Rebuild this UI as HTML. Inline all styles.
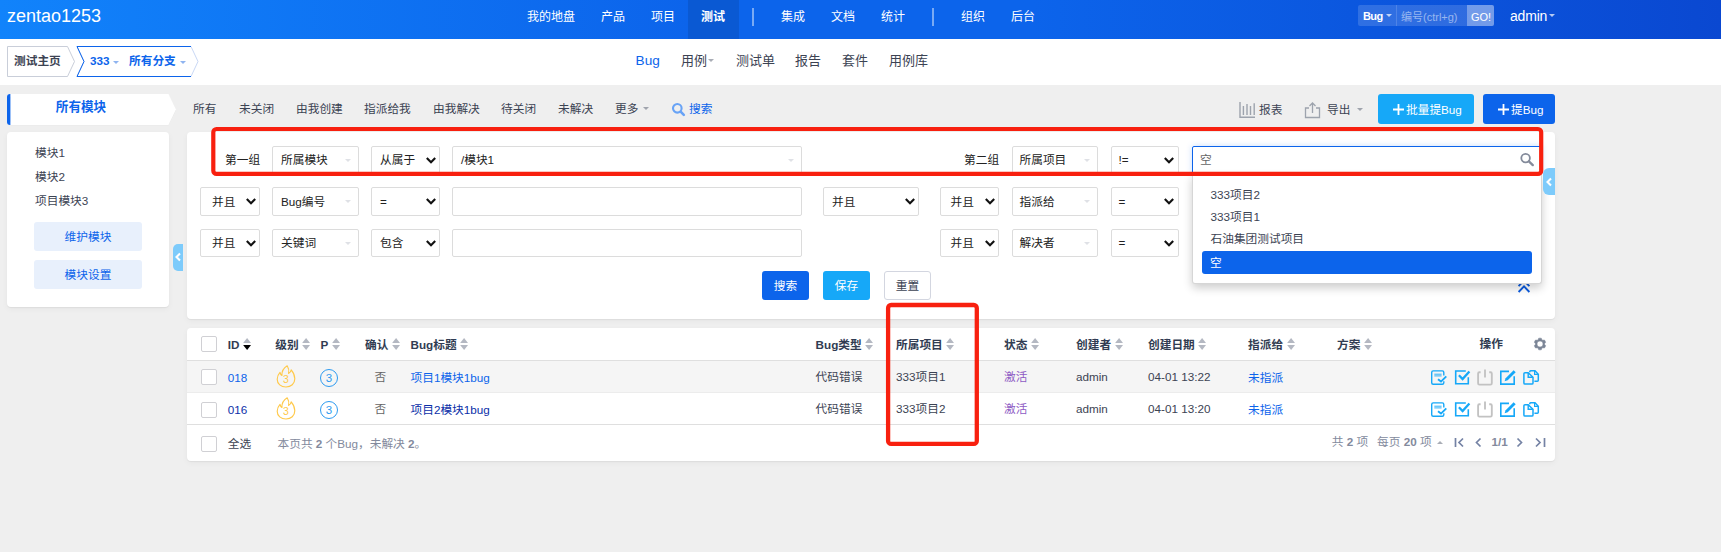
<!DOCTYPE html>
<html lang="zh-CN">
<head>
<meta charset="utf-8">
<title>Bug - zentao1253</title>
<style>
*{box-sizing:border-box;margin:0;padding:0}
html,body{width:1721px;height:552px;overflow:hidden}
body{background:#efefef;font-family:"Liberation Sans","Noto Sans CJK SC",sans-serif;font-size:11.7px;color:#3c4353;position:relative;line-height:18px}
.a{position:absolute;white-space:nowrap}
.b{font-weight:bold}
#header{left:0;top:0;width:1721px;height:38.7px;background:linear-gradient(90deg,#1183fb 0,#0c64eb 40%,#0c64eb 60%,#0a48d1 100%)}
#header .nav{color:#fff;font-size:12px;top:8px;line-height:18px}
#sub{left:0;top:38.7px;width:1721px;height:46px;background:#fff}
.subnav{top:51px;font-size:13px;line-height:20px;color:#3c4353}
.mm{top:100px;line-height:18px;color:#3c4353}
.panel{background:#fff;border-radius:4px;box-shadow:0 1px 1px rgba(0,0,0,.05),0 2px 6px 0 rgba(0,0,0,.045)}
.fc{position:absolute;height:28px;border:1px solid #dcdcdc;border-radius:2px;background:#fff;line-height:26px;padding-left:8px;white-space:nowrap;color:#222}
.chev{position:absolute;right:2.5px;top:9px;width:12px;height:9px}
.cc{position:absolute;right:7px;top:12px;width:0;height:0;border-left:3px solid transparent;border-right:3px solid transparent;border-top:3px solid #dfe1e6}
.btn{position:absolute;height:28px;border-radius:3px;line-height:28px;text-align:center;color:#fff;white-space:nowrap}
.caret{display:inline-block;width:0;height:0;border-left:3px solid transparent;border-right:3px solid transparent;border-top:3px solid currentColor;vertical-align:middle;opacity:.6}
.th{top:336px;font-weight:bold;color:#313c52;line-height:18px}
.td{line-height:18px}
.cb{position:absolute;width:16px;height:16px;border:1px solid #d0d0d4;border-radius:2px;background:#fff}
.sort{display:inline-block;width:8.2px;height:12px;vertical-align:-1px;margin-left:3.5px}
</style>
</head>
<body>
<!-- ============ HEADER ============ -->
<div id="header" class="a">
  <div class="a" style="left:7px;top:5px;font-size:18px;line-height:22px;color:#fff">zentao1253</div>
  <div class="a" style="left:688px;top:0;width:51px;height:38.7px;background:rgba(0,0,0,.1)"></div>
  <div class="a nav" style="left:527px">我的地盘</div>
  <div class="a nav" style="left:601px">产品</div>
  <div class="a nav" style="left:651px">项目</div>
  <div class="a nav b" style="left:701px">测试</div>
  <div class="a" style="left:752px;top:8px;width:2px;height:18px;background:rgba(255,255,255,.45)"></div>
  <div class="a nav" style="left:781px">集成</div>
  <div class="a nav" style="left:831px">文档</div>
  <div class="a nav" style="left:881px">统计</div>
  <div class="a" style="left:932px;top:8px;width:2px;height:18px;background:rgba(255,255,255,.45)"></div>
  <div class="a nav" style="left:961px">组织</div>
  <div class="a nav" style="left:1011px">后台</div>
  <!-- search box -->
  <div class="a" style="left:1358px;top:5px;width:136px;height:21px;background:rgba(255,255,255,.15);border-radius:2px"></div>
  <div class="a" style="left:1396px;top:5px;width:1px;height:21px;background:rgba(255,255,255,.15)"></div>
  <div class="a" style="left:1467px;top:5px;width:27px;height:21px;background:rgba(255,255,255,.33);border-radius:0 2px 2px 0"></div>
  <div class="a b" style="left:1363px;top:7px;font-size:11px;line-height:18px;color:#fff;letter-spacing:-0.6px">Bug</div>
  <div class="a" style="left:1386px;top:14px;width:0;height:0;border-left:3px solid transparent;border-right:3px solid transparent;border-top:3px solid rgba(255,255,255,.7)"></div>
  <div class="a" style="left:1401px;top:8px;font-size:11px;line-height:18px;color:rgba(255,255,255,.5)">编号(ctrl+g)</div>
  <div class="a" style="left:1471px;top:8px;font-size:11px;line-height:18px;color:#fff">GO!</div>
  <div class="a" style="left:1510px;top:6px;font-size:14px;line-height:20px;color:#fff;letter-spacing:-0.2px">admin</div>
  <div class="a" style="left:1549px;top:14px;width:0;height:0;border-left:3px solid transparent;border-right:3px solid transparent;border-top:3px solid rgba(255,255,255,.7)"></div>
</div>

<!-- ============ SUB HEADER ============ -->
<div id="sub" class="a"></div>
<svg class="a" style="left:0;top:40px" width="210" height="44" viewBox="0 0 210 44">
  <path d="M7.5 6.5H67.5L74.5 21.5L67.5 36.5H7.5Z" fill="#fff" stroke="#c9ced9" stroke-width="1"/>
  <path d="M77 6.5H191L198 21.5L191 36.5H77L84 21.5Z" fill="#fff" stroke="#c9d8f5" stroke-width="1"/>
  <path d="M77 6.5H191M191 36.5H77L84 21.5L77 6.5" fill="none" stroke="#0c64eb" stroke-width="1"/>
</svg>
<div class="a b" style="left:14px;top:52px;line-height:18px;color:#3c4353">测试主页</div>
<div class="a b" style="left:90px;top:52px;line-height:18px;color:#0c64eb">333</div>
<div class="a" style="left:113px;top:61px;width:0;height:0;border-left:3px solid transparent;border-right:3px solid transparent;border-top:3px solid #8fb4f0"></div>
<div class="a b" style="left:129px;top:52px;line-height:18px;color:#0c64eb">所有分支</div>
<div class="a" style="left:180px;top:61px;width:0;height:0;border-left:3px solid transparent;border-right:3px solid transparent;border-top:3px solid #8fb4f0"></div>

<div class="a subnav" style="left:635.6px;color:#0c64eb;font-size:13.6px">Bug</div>
<div class="a subnav" style="left:681px">用例</div>
<div class="a" style="left:708px;top:59px;width:0;height:0;border-left:3px solid transparent;border-right:3px solid transparent;border-top:3px solid #a9adb6"></div>
<div class="a subnav" style="left:736px">测试单</div>
<div class="a subnav" style="left:795px">报告</div>
<div class="a subnav" style="left:842px">套件</div>
<div class="a subnav" style="left:889px">用例库</div>

<!-- ============ SIDEBAR ============ -->
<svg class="a" style="left:0;top:90px" width="180" height="40" viewBox="0 0 180 40">
  <path d="M10 4.7H168.5L176 20L168.5 35.3H10Q7 35.3 7 32.3V7.7Q7 4.7 10 4.7Z" fill="rgba(0,0,0,.06)"/>
  <path d="M10 4H168.5L176 19.5L168.5 35H10Q7 35 7 32V7Q7 4 10 4Z" fill="#fff"/>
  <path d="M10.4 4H10Q7 4 7 7V32Q7 35 10 35H10.4Z" fill="#0c64eb"/>
</svg>
<div class="a b" style="left:7px;top:98px;width:148px;text-align:center;font-size:12.6px;line-height:18px;color:#0c64eb">所有模块</div>
<div class="a panel" style="left:7px;top:132px;width:162px;height:175px"></div>
<div class="a" style="left:35px;top:144px">模块1</div>
<div class="a" style="left:35px;top:168px">模块2</div>
<div class="a" style="left:35px;top:192px">项目模块3</div>
<div class="a" style="left:34px;top:222px;width:108px;height:29px;background:#e8f0fc;border-radius:3px;text-align:center;line-height:29px;color:#0c64eb">维护模块</div>
<div class="a" style="left:34px;top:260px;width:108px;height:29px;background:#e8f0fc;border-radius:3px;text-align:center;line-height:29px;color:#0c64eb">模块设置</div>
<!-- collapse handle -->
<div class="a" style="left:173px;top:244px;width:10px;height:27px;background:#7dcbfb;border-radius:5px 0 0 5px"></div>
<svg class="a" style="left:174px;top:252px" width="8" height="10" viewBox="0 0 8 10"><path d="M6 1.5L2.5 5L6 8.5" fill="none" stroke="#fff" stroke-width="2.1"/></svg>

<!-- ============ MAIN MENU ============ -->
<div class="a mm" style="left:193px">所有</div>
<div class="a mm" style="left:239px">未关闭</div>
<div class="a mm" style="left:296px">由我创建</div>
<div class="a mm" style="left:364px">指派给我</div>
<div class="a mm" style="left:433px">由我解决</div>
<div class="a mm" style="left:501px">待关闭</div>
<div class="a mm" style="left:558px">未解决</div>
<div class="a mm" style="left:615px">更多</div>
<div class="a" style="left:643px;top:107px;width:0;height:0;border-left:3px solid transparent;border-right:3px solid transparent;border-top:3px solid #a0a4ad"></div>
<svg class="a" style="left:671px;top:102px" width="15" height="15" viewBox="0 0 15 15"><circle cx="6.3" cy="6.3" r="4.3" fill="none" stroke="#68a3f6" stroke-width="2.1"/><path d="M9.6 9.7L12.8 12.9" stroke="#68a3f6" stroke-width="2.6" stroke-linecap="round"/></svg>
<div class="a mm" style="left:689px;color:#0c64eb">搜索</div>

<svg class="a" style="left:1239px;top:101.5px" width="17" height="17" viewBox="0 0 17 17"><path d="M1 0V15.3H16" fill="none" stroke="#9da3ad" stroke-width="1.4"/><path d="M4.4 4V13M8 2V13M11.5 4V13M15.2 1.2V13" stroke="#9da3ad" stroke-width="1.4"/></svg>
<div class="a mm" style="left:1259px;top:101px">报表</div>
<svg class="a" style="left:1304px;top:100.5px" width="17" height="18" viewBox="0 0 17 18"><path d="M5 7H1.5V16.5H15.5V7H12" fill="none" stroke="#9da3ad" stroke-width="1.3"/><path d="M8.5 12V2M5.5 5L8.5 2L11.5 5" fill="none" stroke="#9da3ad" stroke-width="1.3"/></svg>
<div class="a mm" style="left:1327px;top:101px">导出</div>
<div class="a" style="left:1357px;top:108px;width:0;height:0;border-left:3px solid transparent;border-right:3px solid transparent;border-top:3px solid #a0a4ad"></div>
<div class="btn" style="left:1378px;top:94px;width:96px;height:30px;line-height:32px;background:#16a8f8;text-align:left;padding-left:28px"><svg style="position:absolute;left:15px;top:10px" width="11" height="11" viewBox="0 0 11 11"><path d="M5.5 0V11M0 5.5H11" stroke="#fff" stroke-width="1.8"/></svg>批量提Bug</div>
<div class="btn" style="left:1483px;top:94px;width:72px;height:30px;line-height:32px;background:#0c64eb;text-align:left;padding-left:28px"><svg style="position:absolute;left:14.5px;top:10px" width="11" height="11" viewBox="0 0 11 11"><path d="M5.5 0V11M0 5.5H11" stroke="#fff" stroke-width="1.8"/></svg>提Bug</div>

<!-- ============ SEARCH PANEL ============ -->
<div class="a panel" style="left:187px;top:132px;width:1368px;height:187px"></div>

<!-- ============ SEARCH FORM ============ -->
<div class="a" style="left:225px;top:151px;color:#222">第一组</div>
<div class="fc" style="left:272px;top:146px;width:86.5px">所属模块<i class="cc"></i></div>
<div class="fc" style="left:371px;top:146px;width:69px">从属于<svg class="chev" viewBox="0 0 12 9"><path d="M1.8 2L6 6.3L10.2 2" fill="none" stroke="#111" stroke-width="2.1"/></svg></div>
<div class="fc" style="left:452px;top:146px;width:350px">/模块1<i class="cc" style="right:7px"></i></div>
<div class="a" style="left:964px;top:151px;color:#222">第二组</div>
<div class="fc" style="left:1012px;top:146px;width:85.5px;padding-left:6.5px">所属项目<i class="cc"></i></div>
<div class="fc" style="left:1111px;top:146px;width:67.5px;padding-left:6.5px">!=<svg class="chev" viewBox="0 0 12 9"><path d="M1.8 2L6 6.3L10.2 2" fill="none" stroke="#111" stroke-width="2.1"/></svg></div>
<div class="fc" style="left:1192px;top:146px;width:350px;padding-left:7px;border-color:#0c64eb;color:#666;box-shadow:0 0 6px rgba(12,100,235,.22)">空</div>
<svg class="a" style="left:1517.5px;top:150.2px" width="18" height="18" viewBox="0 0 18 18"><circle cx="7.6" cy="8.1" r="4.3" fill="none" stroke="#848b9b" stroke-width="1.8"/><path d="M10.9 11.4L14.8 15.1" stroke="#848b9b" stroke-width="2.3" stroke-linecap="round"/></svg>
<div class="fc" style="left:200px;top:187px;width:60px;height:29px;line-height:27px;padding-left:11px">并且<svg class="chev" viewBox="0 0 12 9"><path d="M1.8 2L6 6.3L10.2 2" fill="none" stroke="#111" stroke-width="2.1"/></svg></div>
<div class="fc" style="left:272px;top:187px;width:86.5px;height:29px;line-height:27px">Bug编号<i class="cc"></i></div>
<div class="fc" style="left:371px;top:187px;width:69px;height:29px;line-height:27px">=<svg class="chev" viewBox="0 0 12 9"><path d="M1.8 2L6 6.3L10.2 2" fill="none" stroke="#111" stroke-width="2.1"/></svg></div>
<div class="fc" style="left:452px;top:187px;width:350px;height:29px;line-height:27px;"></div>
<div class="fc" style="left:823px;top:187px;width:96px;height:29px;line-height:27px">并且<svg class="chev" viewBox="0 0 12 9"><path d="M1.8 2L6 6.3L10.2 2" fill="none" stroke="#111" stroke-width="2.1"/></svg></div>
<div class="fc" style="left:940px;top:187px;width:59px;height:29px;line-height:27px;padding-left:9.5px">并且<svg class="chev" viewBox="0 0 12 9"><path d="M1.8 2L6 6.3L10.2 2" fill="none" stroke="#111" stroke-width="2.1"/></svg></div>
<div class="fc" style="left:1012px;top:187px;width:85.5px;padding-left:6.5px;height:29px;line-height:27px">指派给<i class="cc"></i></div>
<div class="fc" style="left:1111px;top:187px;width:67.5px;padding-left:6.5px;height:29px;line-height:27px">=<svg class="chev" viewBox="0 0 12 9"><path d="M1.8 2L6 6.3L10.2 2" fill="none" stroke="#111" stroke-width="2.1"/></svg></div>
<div class="fc" style="left:1192px;top:187px;width:350px;height:29px;line-height:27px;"></div>
<div class="fc" style="left:200px;top:229px;width:60px;padding-left:11px">并且<svg class="chev" viewBox="0 0 12 9"><path d="M1.8 2L6 6.3L10.2 2" fill="none" stroke="#111" stroke-width="2.1"/></svg></div>
<div class="fc" style="left:272px;top:229px;width:86.5px">关键词<i class="cc"></i></div>
<div class="fc" style="left:371px;top:229px;width:69px">包含<svg class="chev" viewBox="0 0 12 9"><path d="M1.8 2L6 6.3L10.2 2" fill="none" stroke="#111" stroke-width="2.1"/></svg></div>
<div class="fc" style="left:452px;top:229px;width:350px;"></div>
<div class="fc" style="left:940px;top:229px;width:59px;padding-left:9.5px">并且<svg class="chev" viewBox="0 0 12 9"><path d="M1.8 2L6 6.3L10.2 2" fill="none" stroke="#111" stroke-width="2.1"/></svg></div>
<div class="fc" style="left:1012px;top:229px;width:85.5px;padding-left:6.5px">解决者<i class="cc"></i></div>
<div class="fc" style="left:1111px;top:229px;width:67.5px;padding-left:6.5px">=<svg class="chev" viewBox="0 0 12 9"><path d="M1.8 2L6 6.3L10.2 2" fill="none" stroke="#111" stroke-width="2.1"/></svg></div>
<div class="fc" style="left:1192px;top:229px;width:350px;"></div>
<div class="btn" style="left:762px;top:271px;width:47px;height:29px;line-height:29px;background:#0c64eb">搜索</div>
<div class="btn" style="left:823px;top:271px;width:47px;height:29px;line-height:29px;background:#16a8f8">保存</div>
<div class="btn" style="left:884px;top:271px;width:47px;height:29px;background:#fff;border:1px solid #d3d6e0;color:#3c4353;line-height:27px">重置</div>
<svg class="a" style="left:1516.5px;top:278px" width="14" height="16" viewBox="0 0 14 16"><path d="M1.6 8.2L7 2.6L12.4 8.2M1.6 14L7 8.4L12.4 14" fill="none" stroke="#0c5ce0" stroke-width="1.9"/></svg>
<div class="a" style="left:1192px;top:174px;width:349.5px;height:110px;background:#fff;border:1px solid #d6d6d6;border-top:none;border-radius:0 0 3px 3px;box-shadow:0 4px 10px rgba(0,0,0,.2)"></div>
<div class="a" style="left:1210.5px;top:186px;color:#3c4353">333项目2</div>
<div class="a" style="left:1210.5px;top:208px;color:#3c4353">333项目1</div>
<div class="a" style="left:1210.5px;top:230px;color:#3c4353">石油集团测试项目</div>
<div class="a" style="left:1202px;top:251px;width:330px;height:23px;background:#0c64eb;border-radius:3px;color:#fff;padding-left:8px;line-height:23px">空</div>

<div class="a" style="left:1543px;top:168px;width:12px;height:27px;background:#7dcbfb;border-radius:6px 0 0 6px"></div>
<svg class="a" style="left:1545px;top:177px" width="8" height="10" viewBox="0 0 8 10"><path d="M6 1.5L2.5 5L6 8.5" fill="none" stroke="#fff" stroke-width="2.1"/></svg>

<!-- ============ TABLE PANEL ============ -->
<div class="a panel" style="left:187px;top:328px;width:1368px;height:133px"></div>
<div class="a" style="left:187px;top:360.5px;width:1368px;height:32px;background:#f5f5f5"></div>
<div class="a" style="left:187px;top:360px;width:1368px;height:1px;background:#dfdfdf"></div>
<div class="a" style="left:187px;top:392px;width:1368px;height:1px;background:#ececec"></div>
<div class="a" style="left:187px;top:424px;width:1368px;height:1px;background:#dfdfdf"></div>
<div class="a th" style="left:227.8px">ID<svg class="sort" viewBox="0 0 8 11.8"><path d="M4 0L7.9 5H0.1Z" fill="#b4b8c2"/><path d="M4 11.8L7.9 6.8H0.1Z" fill="#000"/></svg></div>
<div class="a th" style="left:275.2px">级别<svg class="sort" viewBox="0 0 8 11.8"><path d="M4 0L7.9 5H0.1Z" fill="#b4b8c2"/><path d="M4 11.8L7.9 6.8H0.1Z" fill="#b4b8c2"/></svg></div>
<div class="a th" style="left:320.5px">P<svg class="sort" viewBox="0 0 8 11.8"><path d="M4 0L7.9 5H0.1Z" fill="#b4b8c2"/><path d="M4 11.8L7.9 6.8H0.1Z" fill="#b4b8c2"/></svg></div>
<div class="a th" style="left:365px">确认<svg class="sort" viewBox="0 0 8 11.8"><path d="M4 0L7.9 5H0.1Z" fill="#b4b8c2"/><path d="M4 11.8L7.9 6.8H0.1Z" fill="#b4b8c2"/></svg></div>
<div class="a th" style="left:410.5px">Bug标题<svg class="sort" viewBox="0 0 8 11.8"><path d="M4 0L7.9 5H0.1Z" fill="#b4b8c2"/><path d="M4 11.8L7.9 6.8H0.1Z" fill="#b4b8c2"/></svg></div>
<div class="a th" style="left:815.6px">Bug类型<svg class="sort" viewBox="0 0 8 11.8"><path d="M4 0L7.9 5H0.1Z" fill="#b4b8c2"/><path d="M4 11.8L7.9 6.8H0.1Z" fill="#b4b8c2"/></svg></div>
<div class="a th" style="left:896px">所属项目<svg class="sort" viewBox="0 0 8 11.8"><path d="M4 0L7.9 5H0.1Z" fill="#b4b8c2"/><path d="M4 11.8L7.9 6.8H0.1Z" fill="#b4b8c2"/></svg></div>
<div class="a th" style="left:1004px">状态<svg class="sort" viewBox="0 0 8 11.8"><path d="M4 0L7.9 5H0.1Z" fill="#b4b8c2"/><path d="M4 11.8L7.9 6.8H0.1Z" fill="#b4b8c2"/></svg></div>
<div class="a th" style="left:1076px">创建者<svg class="sort" viewBox="0 0 8 11.8"><path d="M4 0L7.9 5H0.1Z" fill="#b4b8c2"/><path d="M4 11.8L7.9 6.8H0.1Z" fill="#b4b8c2"/></svg></div>
<div class="a th" style="left:1148px">创建日期<svg class="sort" viewBox="0 0 8 11.8"><path d="M4 0L7.9 5H0.1Z" fill="#b4b8c2"/><path d="M4 11.8L7.9 6.8H0.1Z" fill="#b4b8c2"/></svg></div>
<div class="a th" style="left:1248px">指派给<svg class="sort" viewBox="0 0 8 11.8"><path d="M4 0L7.9 5H0.1Z" fill="#b4b8c2"/><path d="M4 11.8L7.9 6.8H0.1Z" fill="#b4b8c2"/></svg></div>
<div class="a th" style="left:1337px">方案<svg class="sort" viewBox="0 0 8 11.8"><path d="M4 0L7.9 5H0.1Z" fill="#b4b8c2"/><path d="M4 11.8L7.9 6.8H0.1Z" fill="#b4b8c2"/></svg></div>
<div class="a th" style="left:1479.5px;top:335px">操作</div>
<svg class="a" style="left:1532.6px;top:336.8px" width="14" height="14" viewBox="0 0 14 14"><path d="M5.06 2.83L5.75 1.13L8.25 1.13L8.94 2.83L9.64 3.23L11.46 2.99L12.71 5.15L11.58 6.60L11.58 7.40L12.71 8.85L11.46 11.01L9.64 10.77L8.94 11.17L8.25 12.87L5.75 12.87L5.06 11.17L4.36 10.77L2.54 11.01L1.29 8.85L2.42 7.40L2.42 6.60L1.29 5.15L2.54 2.99L4.36 3.23ZM10.00 7A3.0 3.0 0 1 0 4.00 7A3.0 3.0 0 1 0 10.00 7Z" fill="#7b8596" fill-rule="evenodd" stroke="#7b8596" stroke-width="0.5" stroke-linejoin="round"/></svg>
<div class="cb" style="left:201px;top:336px"></div>
<div class="cb" style="left:201px;top:369px"></div>
<div class="cb" style="left:201px;top:402px"></div>
<div class="cb" style="left:201px;top:436px"></div>
<div class="a td" style="left:227.8px;top:368.5px;color:#0c64eb">018</div>
<svg class="a" style="left:276px;top:365.2px" width="20" height="23" viewBox="0 0 20 23"><path d="M11.2 0.8C13 3.6 13.2 6 12.6 8.4C14.2 7.8 15 6.4 15.2 4.8C17.6 7.6 18.8 10.6 18.8 13.8C18.8 18.8 15 22 10 22C5 22 1.2 18.8 1.2 14.2C1.2 11.4 2.4 9.2 4 7.4C4.3 8.8 4.9 9.8 5.9 10.4C5.8 6.6 7.6 3 11.2 0.8Z" fill="none" stroke="#ffc94a" stroke-width="1.15" stroke-linejoin="round"/><text x="10" y="18" font-size="10.5" text-anchor="middle" fill="#ffc94a" font-family="Liberation Sans, sans-serif">3</text></svg>
<div class="a" style="left:320px;top:368.5px;width:18px;height:18px;border:1.2px solid #2e9bf0;border-radius:50%;color:#2e9bf0;text-align:center;line-height:16px;font-size:11.5px">3</div>
<div class="a td" style="left:374.5px;top:367.5px;color:#666">否</div>
<div class="a td" style="left:410.5px;top:368.5px;color:#0c64eb">项目1模块1bug</div>
<div class="a td" style="left:815.6px;top:367.5px">代码错误</div>
<div class="a td" style="left:896px;top:367.5px">333项目1</div>
<div class="a td" style="left:1004px;top:367.5px;color:#8e5bc4">激活</div>
<div class="a td" style="left:1076px;top:367.5px">admin</div>
<div class="a td" style="left:1148px;top:367.5px">04-01 13:22</div>
<div class="a td" style="left:1248px;top:368.5px;color:#0c64eb">未指派</div>
<div class="a td" style="left:227.8px;top:400.5px;color:#0b2fa8">016</div>
<svg class="a" style="left:276px;top:397.2px" width="20" height="23" viewBox="0 0 20 23"><path d="M11.2 0.8C13 3.6 13.2 6 12.6 8.4C14.2 7.8 15 6.4 15.2 4.8C17.6 7.6 18.8 10.6 18.8 13.8C18.8 18.8 15 22 10 22C5 22 1.2 18.8 1.2 14.2C1.2 11.4 2.4 9.2 4 7.4C4.3 8.8 4.9 9.8 5.9 10.4C5.8 6.6 7.6 3 11.2 0.8Z" fill="none" stroke="#ffc94a" stroke-width="1.15" stroke-linejoin="round"/><text x="10" y="18" font-size="10.5" text-anchor="middle" fill="#ffc94a" font-family="Liberation Sans, sans-serif">3</text></svg>
<div class="a" style="left:320px;top:400.5px;width:18px;height:18px;border:1.2px solid #2e9bf0;border-radius:50%;color:#2e9bf0;text-align:center;line-height:16px;font-size:11.5px">3</div>
<div class="a td" style="left:374.5px;top:399.5px;color:#666">否</div>
<div class="a td" style="left:410.5px;top:400.5px;color:#0b2fa8">项目2模块1bug</div>
<div class="a td" style="left:815.6px;top:399.5px">代码错误</div>
<div class="a td" style="left:896px;top:399.5px">333项目2</div>
<div class="a td" style="left:1004px;top:399.5px;color:#8e5bc4">激活</div>
<div class="a td" style="left:1076px;top:399.5px">admin</div>
<div class="a td" style="left:1148px;top:399.5px">04-01 13:20</div>
<div class="a td" style="left:1248px;top:400.5px;color:#0c64eb">未指派</div>
<svg class="a" style="left:1430px;top:369px" width="112" height="18" viewBox="0 0 112 18" fill="none">
<path d="M13.8 6.6V3.4Q13.8 1.9 12.3 1.9H3.2Q1.7 1.9 1.7 3.4V13.7Q1.7 15.2 3.2 15.2H12.3Q13.8 15.2 13.8 13.7V12.2" stroke="#16a8f8" stroke-width="1.4"/>
<path d="M4.3 5.2H11.6M4.3 6.9H11.6" stroke="#16a8f8" stroke-width="0.9"/>
<path d="M8 10.2L11 12.6L16.3 7.4" stroke="#16a8f8" stroke-width="1.9"/>
<path d="M35.8 2H25.7V14.7H38.3V8.3" stroke="#16a8f8" stroke-width="1.6"/>
<path d="M28.9 6.2L32.6 10L39.4 2.5" stroke="#16a8f8" stroke-width="2.3"/>
<path d="M50.6 3.2H49.4Q48.1 3.2 48.1 4.5V14.3Q48.1 15.6 49.4 15.6H60.5Q61.8 15.6 61.8 14.3V4.5Q61.8 3.2 60.5 3.2H59.2" stroke="#c2c2c2" stroke-width="1.85"/>
<path d="M55 0.6V8.5" stroke="#c2c2c2" stroke-width="1.85"/>
<path d="M79 2.4H70.8V15.1H84.2V7.3" stroke="#16a8f8" stroke-width="1.6"/>
<path d="M74.6 12.2L75.6 9.2L83.6 1.2L85.7 3.3L77.7 11.3Z" fill="#16a8f8"/>
<path d="M98.2 3.7H95Q93.9 3.7 93.9 4.8V14Q93.9 15.1 95 15.1H101.9Q103 15.1 103 14V8.2Z" stroke="#16a8f8" stroke-width="1.5"/>
<path d="M98.2 3.9V8.2H102.8" stroke="#16a8f8" stroke-width="1.4"/>
<path d="M99.8 3.2V2.6Q99.8 1.8 100.6 1.8H105L108.3 5.2V11.2Q108.3 12.2 107.3 12.2H104.4" stroke="#16a8f8" stroke-width="1.5"/>
<path d="M104.6 2V5.4H108" stroke="#16a8f8" stroke-width="1.2"/>
</svg>
<svg class="a" style="left:1430px;top:401px" width="112" height="18" viewBox="0 0 112 18" fill="none">
<path d="M13.8 6.6V3.4Q13.8 1.9 12.3 1.9H3.2Q1.7 1.9 1.7 3.4V13.7Q1.7 15.2 3.2 15.2H12.3Q13.8 15.2 13.8 13.7V12.2" stroke="#16a8f8" stroke-width="1.4"/>
<path d="M4.3 5.2H11.6M4.3 6.9H11.6" stroke="#16a8f8" stroke-width="0.9"/>
<path d="M8 10.2L11 12.6L16.3 7.4" stroke="#16a8f8" stroke-width="1.9"/>
<path d="M35.8 2H25.7V14.7H38.3V8.3" stroke="#16a8f8" stroke-width="1.6"/>
<path d="M28.9 6.2L32.6 10L39.4 2.5" stroke="#16a8f8" stroke-width="2.3"/>
<path d="M50.6 3.2H49.4Q48.1 3.2 48.1 4.5V14.3Q48.1 15.6 49.4 15.6H60.5Q61.8 15.6 61.8 14.3V4.5Q61.8 3.2 60.5 3.2H59.2" stroke="#c2c2c2" stroke-width="1.85"/>
<path d="M55 0.6V8.5" stroke="#c2c2c2" stroke-width="1.85"/>
<path d="M79 2.4H70.8V15.1H84.2V7.3" stroke="#16a8f8" stroke-width="1.6"/>
<path d="M74.6 12.2L75.6 9.2L83.6 1.2L85.7 3.3L77.7 11.3Z" fill="#16a8f8"/>
<path d="M98.2 3.7H95Q93.9 3.7 93.9 4.8V14Q93.9 15.1 95 15.1H101.9Q103 15.1 103 14V8.2Z" stroke="#16a8f8" stroke-width="1.5"/>
<path d="M98.2 3.9V8.2H102.8" stroke="#16a8f8" stroke-width="1.4"/>
<path d="M99.8 3.2V2.6Q99.8 1.8 100.6 1.8H105L108.3 5.2V11.2Q108.3 12.2 107.3 12.2H104.4" stroke="#16a8f8" stroke-width="1.5"/>
<path d="M104.6 2V5.4H108" stroke="#16a8f8" stroke-width="1.2"/>
</svg>
<div class="a td" style="left:227.8px;top:435px;color:#3c4353">全选</div>
<div class="a td" style="left:277.5px;top:435px;color:#838a9d">本页共 <b>2</b> 个Bug，未解决 <b>2</b>。</div>
<div class="a td" style="left:1331.7px;top:432.5px;color:#838a9d">共 <b>2</b> 项</div>
<div class="a td" style="left:1377px;top:432.5px;color:#838a9d">每页 <b>20</b> 项</div>
<div class="a" style="left:1437px;top:441px;width:0;height:0;border-left:3px solid transparent;border-right:3px solid transparent;border-bottom:3px solid #a9adb6"></div>
<svg class="a" style="left:1454px;top:437px" width="95" height="11" viewBox="0 0 95 11"><g fill="none" stroke="#7482a4" stroke-width="1.7"><path d="M1.5 1V10M9 1.5L5 5.5L9 9.5"/><path d="M26.5 1.5L22.5 5.5L26.5 9.5"/><path d="M63.5 1.5L67.5 5.5L63.5 9.5"/><path d="M82 1.5L86 5.5L82 9.5M90.5 1V10"/></g></svg>
<div class="a td b" style="left:1491.5px;top:432.5px;color:#838a9d">1/1</div>
<svg class="a" style="left:0;top:0;pointer-events:none" width="1721" height="552"><rect x="213.3" y="129" width="1327.9" height="44.85" rx="3.2" fill="none" stroke="#f8200f" stroke-width="4.2"/><rect x="888.1" y="305" width="88.7" height="138.9" rx="3" fill="none" stroke="#f8200f" stroke-width="4.3"/></svg>
</body>
</html>
